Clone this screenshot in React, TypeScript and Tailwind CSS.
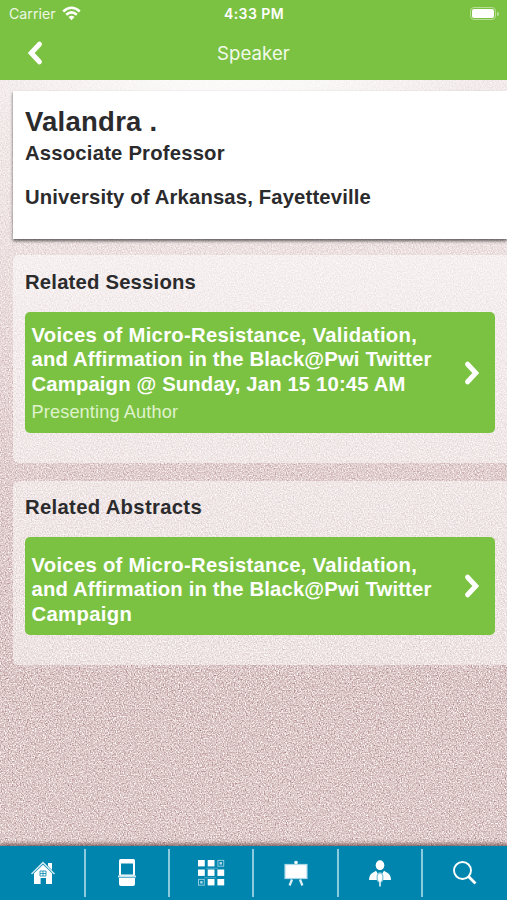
import React from 'react';

const helv = "font-['Liberation_Sans',Arial,sans-serif]";

function Glitter() {
  return (
    <svg className="absolute inset-0 h-full w-full" aria-hidden="true">
      <filter id="glitter" x="0" y="0" width="100%" height="100%" colorInterpolationFilters="sRGB">
        <feTurbulence type="fractalNoise" baseFrequency="0.73" numOctaves="2" seed="8" />
        <feColorMatrix values="0.34 0.34 0.2 0 0.42  0.46 0.46 0.3 0 0.17  0.44 0.44 0.3 0 0.19  0 0 0 0 1" />
        <feGaussianBlur stdDeviation="0.5" />
      </filter>
      <linearGradient id="fade" x1="0" y1="0" x2="0" y2="1">
        <stop offset="0" stopColor="#fbf8f8" stopOpacity="0.85" />
        <stop offset="0.27" stopColor="#f8f2f2" stopOpacity="0.6" />
        <stop offset="0.5" stopColor="#f0e3e4" stopOpacity="0.3" />
        <stop offset="0.75" stopColor="#e6d4d5" stopOpacity="0" />
        <stop offset="1" stopColor="#f2e4e4" stopOpacity="0.12" />
      </linearGradient>
      <radialGradient id="glow" gradientUnits="userSpaceOnUse" cx="0" cy="0" r="1" gradientTransform="translate(230 0) scale(260 260)">
        <stop offset="0" stopColor="#fff" stopOpacity="0.9" />
        <stop offset="0.4" stopColor="#fff" stopOpacity="0.65" />
        <stop offset="1" stopColor="#fff" stopOpacity="0" />
      </radialGradient>
      <rect x="-5" y="-5" width="517" height="910" filter="url(#glitter)" />
      <rect width="100%" height="100%" fill="url(#fade)" />
      <rect width="100%" height="100%" fill="url(#glow)" />
    </svg>
  );
}

function Chevron({ left = false }: { left?: boolean }) {
  return (
    <svg width="18" height="26" viewBox="0 0 18 26" fill="none" stroke="#fff" strokeWidth="5" strokeLinecap="round" strokeLinejoin="miter">
      <path d={left ? 'M13.4 4.2 5.2 13l8.2 8.8' : 'M4.6 4.2 12.800 13l-8.200 8.800'} />
    </svg>
  );
}

const firstLines = [
  { text: 'Voices of Micro-Resistance, Validation,', spacing: 'tracking-[0.280px]' },
  { text: 'and Affirmation in the Black@Pwi Twitter', spacing: 'tracking-[0.160px]' },
];

function LinkCard({ lines, note }: { lines: { text: string; spacing: string }[]; note?: string }) {
  return (
    <div className={`mt-[18px] flex w-[470px] items-center justify-between rounded-[5px] bg-[#7cc242] pl-[6.500px] pr-[14px] text-white ${note ? 'h-[121px]' : 'h-[98px]'}`}>
      <div className={note ? 'pt-[2px]' : 'pt-[7px]'}>
        {lines.map((l) => (
          <div key={l.text} className={`whitespace-nowrap text-[20.280px] font-bold leading-[24.300px] ${l.spacing}`}>{l.text}</div>
        ))}
        {note && <div className="pt-[4px] text-[18.200px] leading-[24px] tracking-[0.120px] text-[#dff2cd]">{note}</div>}
      </div>
      <Chevron />
    </div>
  );
}

const icons = [
  <svg key="home" width="26" height="26" viewBox="0 0 26 26" fill="#fff">
    <path d="M18 3h4v7l-4-4z" />
    <path d="M1.500 14 13 2.600 24.500 14" fill="none" stroke="#c9e6ef" strokeWidth="1.500" />
    <path d="M4 13.300 13 4.800l9 8.500V24h-6v-6h-5.400v6H4z" />
    <path d="M10 11h6v5h-6zM13 11v5M10 13.500h6" fill="none" stroke="#0086ae" strokeWidth="0.800" />
  </svg>,
  <svg key="kiosk" width="20" height="30" viewBox="0 0 20 30">
    <rect x="2" y="1" width="16" height="17" rx="1.500" fill="#fff" />
    <rect x="4" y="5.500" width="12" height="11" fill="#0086ae" />
    <path d="M1 17.500h18v2H1z" fill="#c4e5ef" />
    <path d="M2 20h16v6q0 2-2 2H4q-2 0-2-2z" fill="#fff" />
  </svg>,
  <svg key="grid" width="28" height="28" viewBox="0 0 28 28" fill="#fff">
    {[1.500, 11, 20.500].map((y, r) =>
      [1, 10.700, 20.400].map((x, c) =>
        r + c === 2 && r !== 1 ? (
          <g key={`${r}${c}`}>
            <rect x={x + 0.5} y={y - 0.1} width="5.800" height="5.800" fill="none" stroke="#8fcadd" strokeWidth="1" />
            <rect x={x + 2.2} y={y + 1.6} width="2.400" height="2.400" fill="#b5dce8" />
          </g>
        ) : (
          <rect key={`${r}${c}`} x={x} y={y - 0.5} width="6.800" height="6.400" />
        ),
      ),
    )}
    <path d="M9 9.300h12M7 18.700h12" stroke="#57afca" strokeWidth="0.800" />
  </svg>,
  <svg key="easel" width="26" height="28" viewBox="0 0 26 28" fill="#fff">
    <circle cx="13" cy="3.500" r="1.800" />
    <rect x="2" y="5.500" width="22" height="14" fill="#fff" stroke="#a9d8e6" strokeWidth="1.200" />
    <path d="m9 20.500-2.400 6M17 20.500l2.400 6" stroke="#d9eef4" strokeWidth="2.300" />
  </svg>,
  <svg key="speaker" width="26" height="28" viewBox="0 0 26 28" fill="#fff">
    <ellipse cx="13" cy="6.300" rx="4.300" ry="5" />
    <path d="M2 21q0-6 5-8l2-1.300 2.200 3.500h3.600l2.200-3.500 2 1.300q5 2 5 8z" />
    <ellipse cx="13" cy="18.500" rx="2.900" ry="4.600" stroke="#7cc2d8" strokeWidth="1.200" />
    <path d="M13 22v5.500" stroke="#e8f5f8" strokeWidth="1.600" />
  </svg>,
  <svg key="search" width="26" height="26" viewBox="0 0 26 26" fill="none" stroke="#fff">
    <circle cx="10.500" cy="10.500" r="8.500" strokeWidth="1.900" />
    <path d="m16.500 16.500 7 7" strokeWidth="2.800" />
  </svg>,
];

export default function App() {
  return (
    <div className={`relative h-[900px] w-[507px] overflow-hidden bg-[#dfc9c9] ${helv}`}>
      <Glitter />
      <div className="relative flex h-full flex-col text-[#2b2b2d]">
        <header className="h-[79.500px] bg-[#7cc242] font-['Inter',sans-serif] text-white">
          <div className="grid h-[27px] grid-cols-3 items-center pl-[9px] pr-[8px]">
            <div className="flex items-center gap-[6px] text-[14.200px] text-[#ecf7e2]">
              <span>Carrier</span>
              <svg width="19" height="15" viewBox="0 0 19 15" fill="none" stroke="#fff" strokeWidth="2.500">
                <path d="M1.200 5.500Q9.500-2 17.800 5.500M4.200 8.700q5.300-4.700 10.600 0" />
                <path d="M6.500 11q3-2.500 6 0l-3 3.200z" fill="#fff" stroke="none" />
              </svg>
            </div>
            <div className="whitespace-nowrap text-center text-[14px] font-semibold tracking-[0.450px]">4:33 PM</div>
            <div className="flex items-center justify-end gap-px">
              <div className="h-[13px] w-[26px] rounded-[4px] border border-[#b7dd95] p-px"><div className="h-full rounded-[2px] bg-white" /></div>
              <div className="h-[4px] w-[2px] rounded-r-full bg-[#b7dd95]" />
            </div>
          </div>
          <div className="grid h-[52px] grid-cols-3 items-center px-[26px]">
            <Chevron left />
            <div className="pt-px text-center text-[18.600px] tracking-[0.050px] text-[#f1f9ea]">Speaker</div>
          </div>
        </header>

        <main className="flex-1 pl-[13px] pt-[11.500px]">
          <section className="h-[148px] bg-white pl-[12px] pt-[15px] font-bold shadow-[0_2px_3px_rgba(0,0,0,0.6)]">
            <h1 className="text-[27.500px] leading-[32px] tracking-[0.250px]">Valandra .</h1>
            <p className="text-[20.280px] leading-[30px] tracking-[0.200px]">Associate Professor</p>
            <p className="pt-[14px] text-[20.280px] leading-[30px] tracking-[0.150px]">University of Arkansas, Fayetteville</p>
          </section>
          <section className="mt-[16px] h-[208px] rounded-l-[6px] bg-white/50 pl-[12px] pt-[15px]">
            <h2 className="text-[20.280px] font-bold leading-[24px] tracking-[0.200px]">Related Sessions</h2>
            <LinkCard
              lines={[...firstLines, { text: 'Campaign @ Sunday, Jan 15 10:45 AM', spacing: 'tracking-[0.150px]' }]}
              note="Presenting Author"
            />
          </section>
          <section className="mt-[18px] h-[184px] rounded-l-[6px] bg-white/50 pl-[12px] pt-[14px]">
            <h2 className="text-[20.280px] font-bold leading-[24px] tracking-[0.320px]">Related Abstracts</h2>
            <LinkCard lines={[...firstLines, { text: 'Campaign', spacing: 'tracking-[0.350px]' }]} />
          </section>
        </main>

        <nav className="grid h-[54px] grid-cols-6 bg-[#0086ae] py-[3px] pl-[2px] shadow-[0_-2px_4px_rgba(60,20,20,0.6)]">
          {icons.map((icon, i) => (
            <div key={i} className={`flex items-center justify-center ${i < 5 ? 'border-r-2 border-[#8acbdd]' : ''}`}>{icon}</div>
          ))}
        </nav>
      </div>
    </div>
  );
}
